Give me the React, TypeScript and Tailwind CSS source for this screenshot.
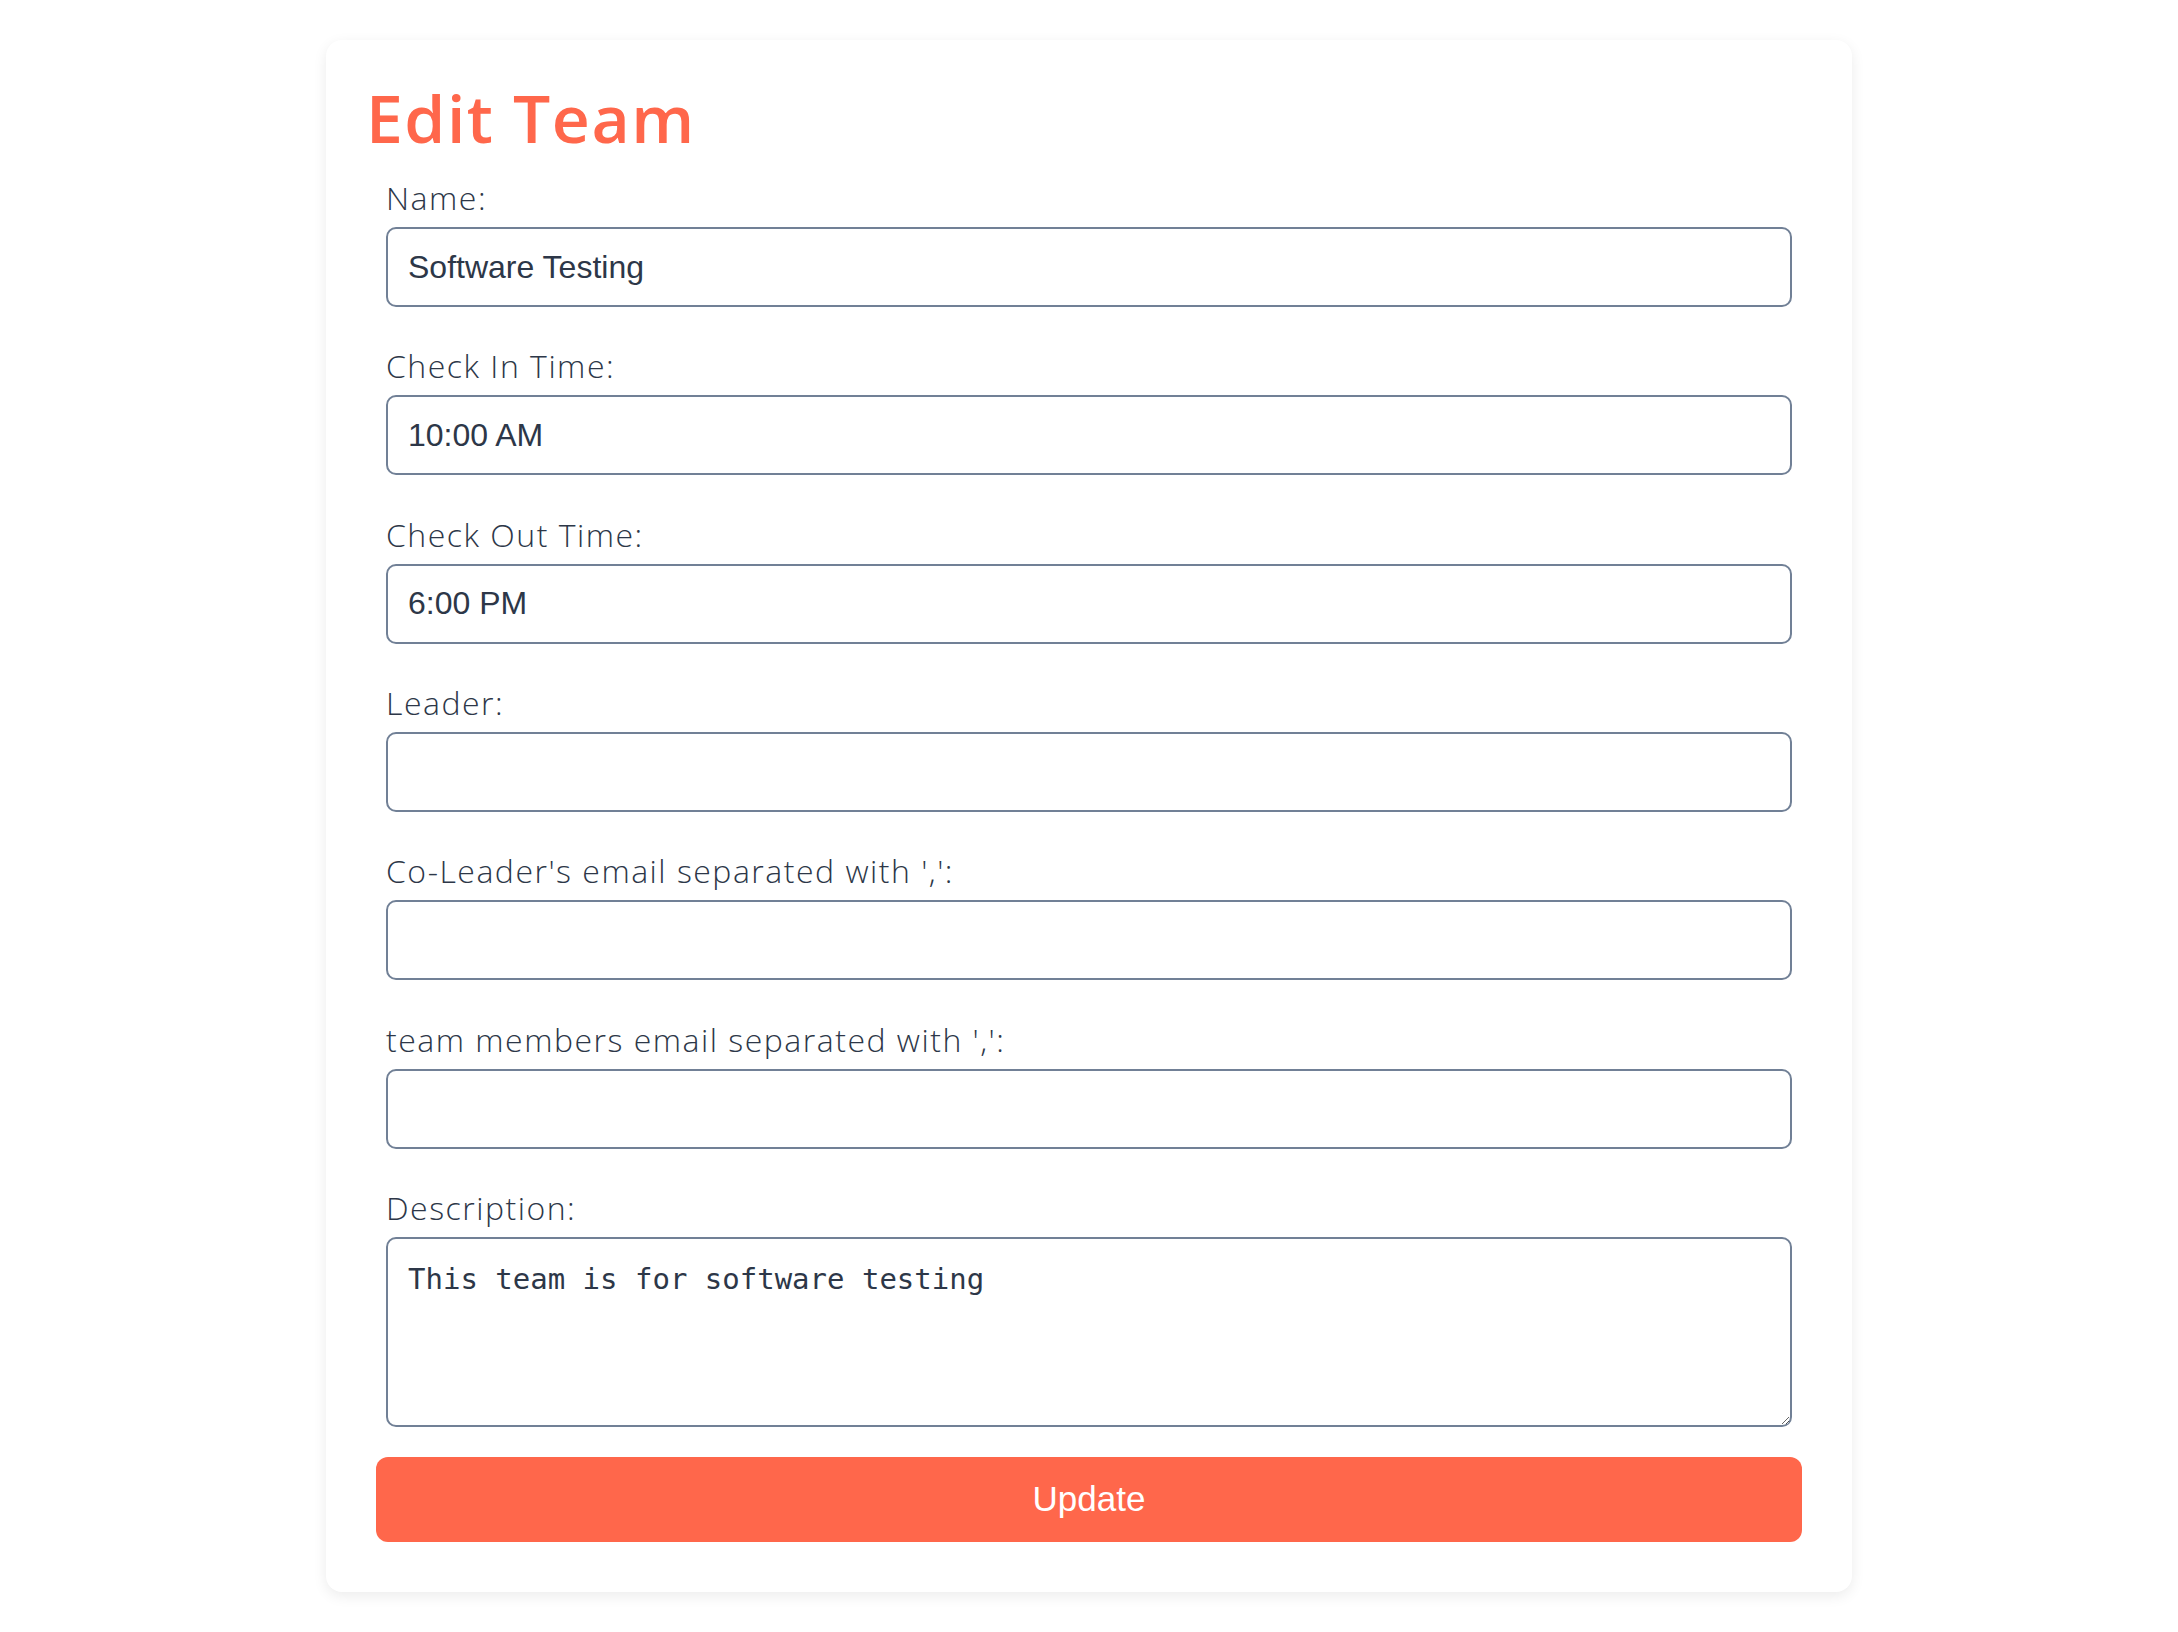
import React, { useState } from 'react';

type Field = {
  id: string;
  label: string;
  value: string;
};

const initialFields: Field[] = [
  { id: 'name', label: 'Name:', value: 'Software Testing' },
  { id: 'checkIn', label: 'Check In Time:', value: '10:00 AM' },
  { id: 'checkOut', label: 'Check Out Time:', value: '6:00 PM' },
  { id: 'leader', label: 'Leader:', value: '' },
  { id: 'coLeaders', label: "Co-Leader's email separated with ',':", value: '' },
  { id: 'members', label: "team members email separated with ',':", value: '' },
];

const EditTeam: React.FC = () => {
  const [fields, setFields] = useState<Field[]>(initialFields);
  const [description, setDescription] = useState<string>('This team is for software testing');

  const handleChange = (id: string, value: string) => {
    setFields((prev) => prev.map((f) => (f.id === id ? { ...f, value } : f)));
  };

  return (
    <div className="min-h-screen bg-white pt-10 pb-10">
      <div className="mx-auto w-[1526px] rounded-2xl bg-white px-10 pt-[45px] pb-[50px] shadow-[0_4px_14px_rgba(0,0,0,0.08)]">
        <h1 className="font-['Open_Sans',sans-serif] text-[66px] font-semibold leading-[64px] tracking-[1.5px] text-[#ff674b]">
          Edit Team
        </h1>

        <form className="mt-[29px]" onSubmit={(e) => e.preventDefault()}>
          <div className="mx-5 flex flex-col gap-[39.33px]">
            {fields.map((field) => (
              <div key={field.id} className="flex flex-col gap-[9px]">
                <label
                  htmlFor={field.id}
                  className="font-['Open_Sans',sans-serif] text-[32px] font-light leading-10 tracking-[1.5px] text-[#2d3748]"
                >
                  {field.label}
                </label>
                <input
                  id={field.id}
                  value={field.value}
                  onChange={(e) => handleChange(field.id, e.target.value)}
                  className="h-20 w-full rounded-[10px] border-2 border-[#718096] bg-white px-5 font-['Liberation_Sans',Arial,sans-serif] text-[32px] text-[#2d3748] outline-none"
                />
              </div>
            ))}

            <div className="flex flex-col gap-[9px]">
              <label
                htmlFor="description"
                className="font-['Open_Sans',sans-serif] text-[32px] font-light leading-10 tracking-[1.5px] text-[#2d3748]"
              >
                Description:
              </label>
              <textarea
                id="description"
                value={description}
                onChange={(e) => setDescription(e.target.value)}
                className="h-[190px] w-full rounded-[10px] border-2 border-[#718096] bg-white px-5 pt-[21px] font-['DejaVu_Sans_Mono',monospace] text-[29px] leading-[38px] text-[#2d3748] outline-none"
              />
            </div>
          </div>

          <button
            type="submit"
            className="mx-[10px] mt-[30px] h-[85px] w-[calc(100%-20px)] rounded-xl bg-[#ff674b] font-['Liberation_Sans',Arial,sans-serif] text-[35px] text-white"
          >
            Update
          </button>
        </form>
      </div>
    </div>
  );
};

export default function App() {
  return <EditTeam />;
}
